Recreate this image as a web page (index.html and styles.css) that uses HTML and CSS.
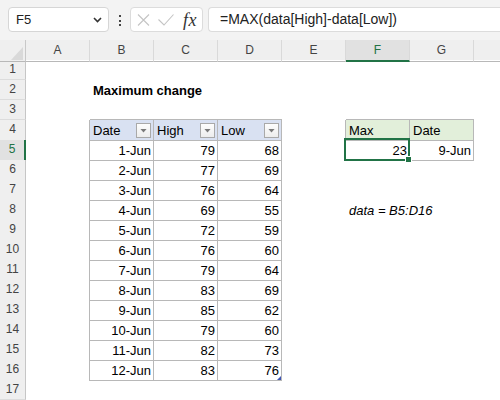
FILE: index.html
```html
<!DOCTYPE html>
<html>
<head>
<meta charset="utf-8">
<link rel="stylesheet" href="styles.css">
</head>
<body>
<div class="toolbar">
  <div class="namebox"><span>F5</span><svg class="chev" width="9" height="6" viewBox="0 0 9 6"><path d="M1 1l3.5 3.5L8 1" fill="none" stroke="#333" stroke-width="1.6"/></svg></div>
  <div class="dots"><i></i><i></i><i></i></div>
  <div class="fxbox">
    <svg class="ic-x" width="13" height="12" viewBox="0 0 13 12"><path d="M1 0.5l11 11M12 0.5l-11 11" stroke="#c4c4c4" stroke-width="1.1" fill="none"/></svg>
    <svg class="ic-check" width="16" height="12" viewBox="0 0 16 12"><path d="M0.5 5.5l5.5 5.5L15.5 0.5" stroke="#c4c4c4" stroke-width="1.1" fill="none"/></svg>
    <span class="fx">fx</span>
  </div>
  <div class="formula">=MAX(data[High]-data[Low])</div>
</div>

<div class="sheet">
  <div class="row hrow">
    <div class="corner"></div>
    <div class="ch">A</div><div class="ch">B</div><div class="ch">C</div><div class="ch">D</div><div class="ch">E</div><div class="ch active">F</div><div class="ch">G</div><div class="ch last"></div>
  </div>

  <div class="row"><div class="rh">1</div></div>
  <div class="row"><div class="rh">2</div><div class="c"></div><div class="c title">Maximum change</div></div>
  <div class="row"><div class="rh">3</div><div class="c"></div><div class="c bb"></div><div class="c bb"></div><div class="c bb"></div><div class="c"></div><div class="c bb"></div><div class="c bb"></div></div>
  <div class="row"><div class="rh">4</div><div class="c br"></div>
    <div class="c th blue"><span>Date</span><b class="fb"></b></div>
    <div class="c th blue"><span>High</span><b class="fb"></b></div>
    <div class="c th blue"><span>Low</span><b class="fb"></b></div>
    <div class="c br"></div>
    <div class="c th green"><span>Max</span></div>
    <div class="c th green"><span>Date</span></div>
  </div>
  <div class="row"><div class="rh sel">5</div><div class="c br"></div><div class="c tb n">1-Jun</div><div class="c tb n">79</div><div class="c tb n">68</div><div class="c br"></div><div class="c tb n selcell">23</div><div class="c tb n">9-Jun</div></div>
  <div class="row"><div class="rh">6</div><div class="c br"></div><div class="c tb n">2-Jun</div><div class="c tb n">77</div><div class="c tb n">69</div></div>
  <div class="row"><div class="rh">7</div><div class="c br"></div><div class="c tb n">3-Jun</div><div class="c tb n">76</div><div class="c tb n">64</div></div>
  <div class="row"><div class="rh">8</div><div class="c br"></div><div class="c tb n">4-Jun</div><div class="c tb n">69</div><div class="c tb n">55</div><div class="c"></div><div class="c note">data = B5:D16</div></div>
  <div class="row"><div class="rh">9</div><div class="c br"></div><div class="c tb n">5-Jun</div><div class="c tb n">72</div><div class="c tb n">59</div></div>
  <div class="row"><div class="rh">10</div><div class="c br"></div><div class="c tb n">6-Jun</div><div class="c tb n">76</div><div class="c tb n">60</div></div>
  <div class="row"><div class="rh">11</div><div class="c br"></div><div class="c tb n">7-Jun</div><div class="c tb n">79</div><div class="c tb n">64</div></div>
  <div class="row"><div class="rh">12</div><div class="c br"></div><div class="c tb n">8-Jun</div><div class="c tb n">83</div><div class="c tb n">69</div></div>
  <div class="row"><div class="rh">13</div><div class="c br"></div><div class="c tb n">9-Jun</div><div class="c tb n">85</div><div class="c tb n">62</div></div>
  <div class="row"><div class="rh">14</div><div class="c br"></div><div class="c tb n">10-Jun</div><div class="c tb n">79</div><div class="c tb n">60</div></div>
  <div class="row"><div class="rh">15</div><div class="c br"></div><div class="c tb n">11-Jun</div><div class="c tb n">82</div><div class="c tb n">73</div></div>
  <div class="row"><div class="rh">16</div><div class="c br"></div><div class="c tb n">12-Jun</div><div class="c tb n">83</div><div class="c tb n endcell">76</div></div>
  <div class="row"><div class="rh">17</div></div>
</div>
</body>
</html>
```

FILE: styles.css
```css
* { box-sizing: border-box; }

html, body {
  margin: 0;
  padding: 0;
}

body {
  width: 500px;
  height: 400px;
  overflow: hidden;
  background: #ffffff;
  font-family: "Liberation Sans", Arial, sans-serif;
  color: #000;
}

/* ---------- formula bar ---------- */
.toolbar {
  height: 40px;
  background: #f3f3f3;
  display: flex;
  align-items: flex-start;
  padding: 7px 0 0 8px;
}

.namebox {
  width: 101px;
  height: 25px;
  background: #fff;
  border: 1px solid #d6d6d6;
  border-radius: 4px;
  display: flex;
  align-items: center;
  justify-content: space-between;
  padding: 0 6px 0 7px;
  font-size: 13px;
  color: #222;
}

.dots {
  width: 21px;
  height: 25px;
  padding-top: 2px;
  display: flex;
  flex-direction: column;
  align-items: center;
  justify-content: center;
  gap: 2.5px;
}

.dots i {
  display: block;
  width: 2px;
  height: 2px;
  background: #444;
}

.fxbox {
  width: 73px;
  height: 25px;
  background: #fff;
  border: 1px solid #dcdcdc;
  border-radius: 4px;
  display: flex;
  align-items: center;
  padding-left: 6px;
}

.ic-check { margin-left: 8px; }

.fx {
  margin-left: 9px;
  font-family: "Liberation Serif", "Times New Roman", serif;
  font-style: italic;
  font-size: 18px;
  line-height: 20px;
  color: #333;
  letter-spacing: 0.5px;
}

.formula {
  margin-left: 5px;
  flex: 1;
  height: 25px;
  background: #fff;
  border: 1px solid #dcdcdc;
  border-right: none;
  border-radius: 4px 0 0 4px;
  padding-left: 11px;
  font-size: 14px;
  line-height: 23px;
  color: #222;
}

/* ---------- sheet ---------- */
.row {
  display: grid;
  grid-template-columns: 26px repeat(7, 64px) 1fr;
  height: 20px;
}

.hrow { background: #efefef; }

.corner {
  position: relative;
  background: #efefef;
  border-right: 1px solid #c8c8c8;
  border-bottom: 1px solid #b8b8b8;
}

.corner::after {
  content: "";
  position: absolute;
  right: 2px;
  bottom: 1px;
  width: 12px;
  height: 13px;
  background: #d9d9d9;
  clip-path: polygon(100% 0, 100% 100%, 0 100%);
}

.ch {
  border-right: 1px solid #d9d9d9;
  border-bottom: 1px solid #b8b8b8;
  text-align: center;
  font-size: 12px;
  line-height: 20px;
  color: #444;
}

.ch.last { border-right: none; }

.ch.active {
  background: #e1e1e1;
  border-bottom: 2px solid #217346;
  color: #217346;
}

.rh {
  background: #efefef;
  border-right: 1px solid #c6c6c6;
  border-bottom: 1px solid #dcdcdc;
  text-align: center;
  font-size: 12px;
  line-height: 19px;
  color: #444;
}

.rh.sel {
  background: #e1e1e1;
  border-right: 2px solid #217346;
  color: #217346;
}

.c {
  font-size: 13px;
  line-height: 18px;
  padding: 2px 2px 0 3px;
  white-space: nowrap;
}

.title { font-weight: bold; }

.note { font-style: italic; }

.n { text-align: right; }

.bb { border-bottom: 1px solid #b8b8b8; }
.br { border-right: 1px solid #b8b8b8; }

.tb {
  border-right: 1px solid #b8b8b8;
  border-bottom: 1px solid #b8b8b8;
}

.th {
  display: flex;
  justify-content: space-between;
  align-items: flex-start;
  padding: 0 2px 0 3px;
  border-right: 1px solid #b8b8b8;
  border-bottom: 1px solid #b8b8b8;
}

.th span {
  padding-top: 2px;
  line-height: 18px;
}

.blue { background: #d9e1f2; }
.green { background: #e2efda; }

.fb {
  margin-top: 3px;
  width: 15px;
  height: 15px;
  border: 1px solid #a9a9a9;
  background: linear-gradient(#fdfdfd, #ededed);
  display: flex;
  align-items: center;
  justify-content: center;
}

.fb::after {
  content: "";
  width: 7px;
  height: 4px;
  background: #7a7a7a;
  clip-path: polygon(0 0, 100% 0, 50% 100%);
}

/* active cell */
.selcell { position: relative; }

.selcell::after {
  content: "";
  position: absolute;
  left: -2px;
  top: -2px;
  right: -1px;
  bottom: -1px;
  border: 2px solid #217346;
  z-index: 2;
}

.selcell::before {
  content: "";
  position: absolute;
  right: -2px;
  bottom: -2px;
  width: 5px;
  height: 5px;
  background: #217346;
  box-shadow: 0 0 0 1px #fff;
  z-index: 3;
}

/* table resize corner */
.endcell { position: relative; }

.endcell::after {
  content: "";
  position: absolute;
  right: 0;
  bottom: 0;
  width: 4px;
  height: 4px;
  background: #3f55b4;
  clip-path: polygon(100% 0, 100% 100%, 0 100%);
}
```
